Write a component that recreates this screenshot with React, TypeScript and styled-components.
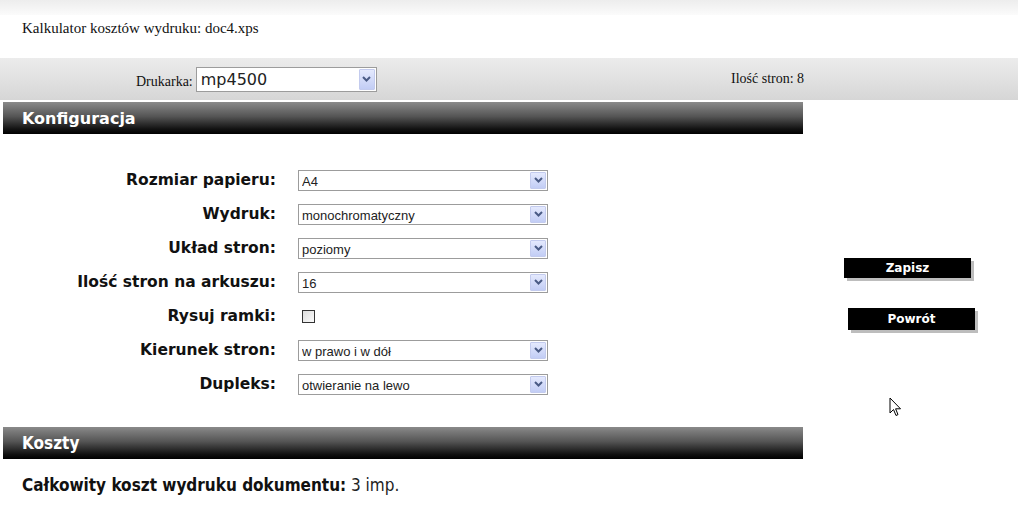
import React from 'react';
import styled, { createGlobalStyle } from 'styled-components';

const GlobalStyle = createGlobalStyle`
  html, body {
    margin: 0;
    padding: 0;
    background: #fff;
  }
  body {
    width: 1018px;
    height: 520px;
    overflow: hidden;
    font-family: 'DejaVu Sans', Verdana, sans-serif;
  }
`;

const Page = styled.div`
  position: relative;
  width: 1018px;
  height: 520px;
`;

const TopStrip = styled.div`
  height: 15px;
  background: linear-gradient(180deg, #ededed, #fbfbfb);
`;

const TitleRow = styled.div`
  height: 43px;
  padding-left: 22px;
  font-family: 'Liberation Serif', 'Times New Roman', serif;
  font-size: 15px;
  color: #111;
  line-height: 26px;
`;

const Toolbar = styled.div`
  height: 42px;
  background: linear-gradient(180deg, #ececec, #d6d6d6);
  display: flex;
  align-items: center;
  font-family: 'Liberation Serif', 'Times New Roman', serif;
  font-size: 14px;
  color: #111;
  border-bottom: 2px solid #fff;
`;

const PrinterGroup = styled.div`
  display: flex;
  align-items: center;
  margin-left: 136px;
  width: 595px;
  gap: 3px;
`;

const PrinterLabel = styled.span`
  padding-top: 5px;
`;

const PageCount = styled.span``;

const Content = styled.div`
  display: flex;
`;

const MainColumn = styled.div`
  width: 800px;
  margin-left: 3px;
`;

const SectionHeader = styled.div<{ $condensed?: boolean }>`
  height: 32px;
  background: linear-gradient(180deg, #8a8a8a 0%, #555 45%, #111 85%, #000 100%);
  color: #fff;
  font-weight: bold;
  font-size: ${(p) => (p.$condensed ? '17px' : '16px')};
  font-family: ${(p) =>
    p.$condensed ? "'DejaVu Sans Condensed', 'DejaVu Sans', sans-serif" : "'DejaVu Sans', Verdana, sans-serif"};
  font-stretch: ${(p) => (p.$condensed ? 'condensed' : 'normal')};
  display: flex;
  align-items: center;
  padding-left: 19px;
`;

const Form = styled.div`
  padding: 29px 0 26px;
  display: grid;
  grid-template-columns: 273px 250px;
  column-gap: 22px;
  grid-auto-rows: 34px;
  align-items: center;
`;

const Label = styled.label`
  text-align: right;
  font-weight: bold;
  font-size: 15.5px;
  color: #111;
`;

const SelectWrap = styled.div<{ $w: number; $h: number }>`
  position: relative;
  width: ${(p) => p.$w}px;
  height: ${(p) => p.$h}px;
  box-sizing: border-box;
  border: 1px solid #9c9c9c;
  background: #fff;
`;

const NativeSelect = styled.select<{ $big?: boolean }>`
  appearance: none;
  -webkit-appearance: none;
  border: none;
  outline: none;
  background: transparent;
  width: 100%;
  height: 100%;
  padding: 0 0 0 ${(p) => (p.$big ? '4px' : '3px')};
  margin: 0;
  font-family: ${(p) => (p.$big ? "'DejaVu Sans', Tahoma, sans-serif" : "'Liberation Sans', Arial, sans-serif")};
  font-size: ${(p) => (p.$big ? '16px' : '13px')};
  color: #222;
`;

const ArrowButton = styled.div`
  position: absolute;
  top: 1px;
  right: 1px;
  bottom: 1px;
  width: 16px;
  box-sizing: border-box;
  border: 1px solid #c3cbee;
  border-radius: 1px;
  background: linear-gradient(180deg, #e4e9fd, #c2cdf5);
  display: flex;
  align-items: center;
  justify-content: center;
  pointer-events: none;
`;

const Check = styled.input`
  appearance: none;
  -webkit-appearance: none;
  width: 13px;
  height: 13px;
  margin: 0 0 0 4px;
  box-sizing: border-box;
  border: 1px solid #333;
  background: linear-gradient(135deg, #dcdcdc, #fafafa);
`;

const Total = styled.div`
  padding: 16px 0 0 19px;
  font-family: 'DejaVu Sans Condensed', 'DejaVu Sans', sans-serif;
  font-stretch: condensed;
  font-size: 17px;
  color: #111;
`;

const TotalLabel = styled.b``;

const TotalValue = styled.span`
  font-weight: normal;
  font-size: 17px;
  color: #222;
`;

const SideColumn = styled.div`
  display: flex;
  flex-direction: column;
  padding-top: 156px;
  gap: 30px;
`;

const ActionButton = styled.button<{ $offset: number; $h: number }>`
  width: 127px;
  height: ${(p) => p.$h}px;
  margin-left: ${(p) => p.$offset}px;
  border: none;
  background: #000;
  color: #fff;
  font-family: 'DejaVu Sans', Verdana, sans-serif;
  font-weight: bold;
  font-size: 12px;
  box-shadow: 3px 3px 0 #bdbdbd;
  padding: 0;
  cursor: pointer;
`;

const Cursor = styled.svg`
  position: absolute;
  left: 889px;
  top: 397px;
`;

const Chevron = () => (
  <svg width="9" height="6" viewBox="0 0 9 6">
    <path d="M1 1 L4.5 4.5 L8 1" stroke="#4a5b85" strokeWidth="2" fill="none" />
  </svg>
);

const Select: React.FC<{ value: string; w: number; h: number; big?: boolean }> = ({ value, w, h, big }) => (
  <SelectWrap $w={w} $h={h}>
    <NativeSelect $big={big} defaultValue={value}>
      <option>{value}</option>
    </NativeSelect>
    <ArrowButton>
      <Chevron />
    </ArrowButton>
  </SelectWrap>
);

const rows: { label: string; value?: string }[] = [
  { label: 'Rozmiar papieru:', value: 'A4' },
  { label: 'Wydruk:', value: 'monochromatyczny' },
  { label: 'Układ stron:', value: 'poziomy' },
  { label: 'Ilość stron na arkuszu:', value: '16' },
  { label: 'Rysuj ramki:' },
  { label: 'Kierunek stron:', value: 'w prawo i w dół' },
  { label: 'Dupleks:', value: 'otwieranie na lewo' },
];

const App: React.FC = () => (
  <Page>
    <GlobalStyle />
    <TopStrip />
    <TitleRow>Kalkulator kosztów wydruku: doc4.xps</TitleRow>
    <Toolbar>
      <PrinterGroup>
        <PrinterLabel>Drukarka:</PrinterLabel>
        <Select value="mp4500" w={181} h={25} big />
      </PrinterGroup>
      <PageCount>Ilość stron: 8</PageCount>
    </Toolbar>
    <Content>
      <MainColumn>
        <SectionHeader>Konfiguracja</SectionHeader>
        <Form>
          {rows.map((r) => (
            <React.Fragment key={r.label}>
              <Label>{r.label}</Label>
              {r.value ? <Select value={r.value} w={250} h={21} /> : <Check type="checkbox" />}
            </React.Fragment>
          ))}
        </Form>
        <SectionHeader $condensed>Koszty</SectionHeader>
        <Total>
          <TotalLabel>Całkowity koszt wydruku dokumentu:</TotalLabel> <TotalValue>3 imp.</TotalValue>
        </Total>
      </MainColumn>
      <SideColumn>
        <ActionButton $offset={41} $h={20}>Zapisz</ActionButton>
        <ActionButton $offset={45} $h={22}>Powrót</ActionButton>
      </SideColumn>
    </Content>
    <Cursor width="13" height="21" viewBox="0 0 13 21">
      <path d="M1 1 L1 16 L4.5 12.5 L7 18.5 L9 17.6 L6.6 11.8 L11.5 11.8 Z" fill="#fff" stroke="#000" strokeWidth="1" strokeLinejoin="miter" />
    </Cursor>
  </Page>
);

export default App;
